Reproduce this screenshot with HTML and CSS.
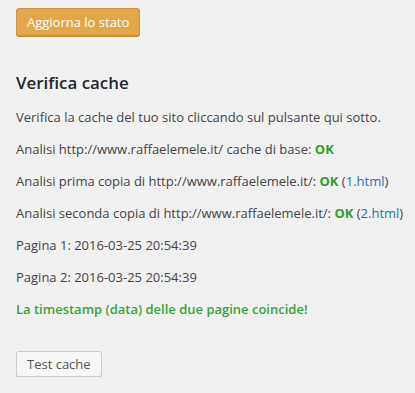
FILE: index.html
```html
<!DOCTYPE html>
<html lang="it">
<head>
<meta charset="utf-8">
<title>Verifica cache</title>
<link rel="stylesheet" href="styles.css">
</head>
<body>
<div class="wrap">
  <div class="top-actions">
    <button class="btn btn-orange" type="button">Aggiorna lo stato</button>
  </div>
  <h2 class="title">Verifica cache</h2>
  <div class="results">
    <p>Verifica la cache del tuo sito cliccando sul pulsante qui sotto.</p>
    <p>Analisi http://www.raffaelemele.it/ cache di base: <span class="ok">OK</span></p>
    <p>Analisi prima copia di http://www.raffaelemele.it/: <span class="ok">OK</span> (<a href="#">1.html</a>)</p>
    <p>Analisi seconda copia di http://www.raffaelemele.it/: <span class="ok">OK</span> (<a href="#">2.html</a>)</p>
    <p>Pagina 1: 2016-03-25 20:54:39</p>
    <p>Pagina 2: 2016-03-25 20:54:39</p>
    <p class="success">La timestamp (data) delle due pagine coincide!</p>
  </div>
  <div class="submit">
    <button class="btn btn-secondary" type="button">Test cache</button>
  </div>
</div>
</body>
</html>
```

FILE: styles.css
```css
html, body {
  margin: 0;
  padding: 0;
  background: #f1f1f1;
}

body {
  font-family: "Open Sans", "Liberation Sans", sans-serif;
  font-size: 13px;
  color: #444;
}

.wrap {
  padding: 8px 0 0 16px;
}

.top-actions {
  display: flex;
}

.btn {
  font-family: "Open Sans", "Liberation Sans", sans-serif;
  font-size: 13px;
  border-radius: 3px;
  border: 1px solid;
  box-sizing: border-box;
  padding: 0 10px;
  cursor: pointer;
  margin: 0;
}

.btn-orange {
  height: 28px;
  line-height: 26px;
  background: #e2a74b;
  border-color: #cc9440;
  color: #fff;
  box-shadow: 0 1px 0 #c58c36;
}

.title {
  margin: 35px 0 14px 0;
  font-size: 16.9px;
  line-height: 23px;
  font-weight: 600;
  color: #23282d;
}

.results p {
  margin: 0 0 13px 0;
  line-height: 19px;
  white-space: nowrap;
}

.results p:last-child {
  margin-bottom: 0;
}

.ok {
  color: #2e9e2e;
  font-weight: 700;
}

.results a {
  color: #1e73b0;
  text-decoration: none;
}

.success {
  color: #35a535;
  font-weight: 600;
}

.submit {
  display: flex;
  margin-top: 32px;
}

.btn-secondary {
  height: 26px;
  line-height: 24px;
  background: #f7f7f7;
  border-color: #cccccc;
  color: #555;
  box-shadow: 0 1px 0 #cccccc;
}
```
